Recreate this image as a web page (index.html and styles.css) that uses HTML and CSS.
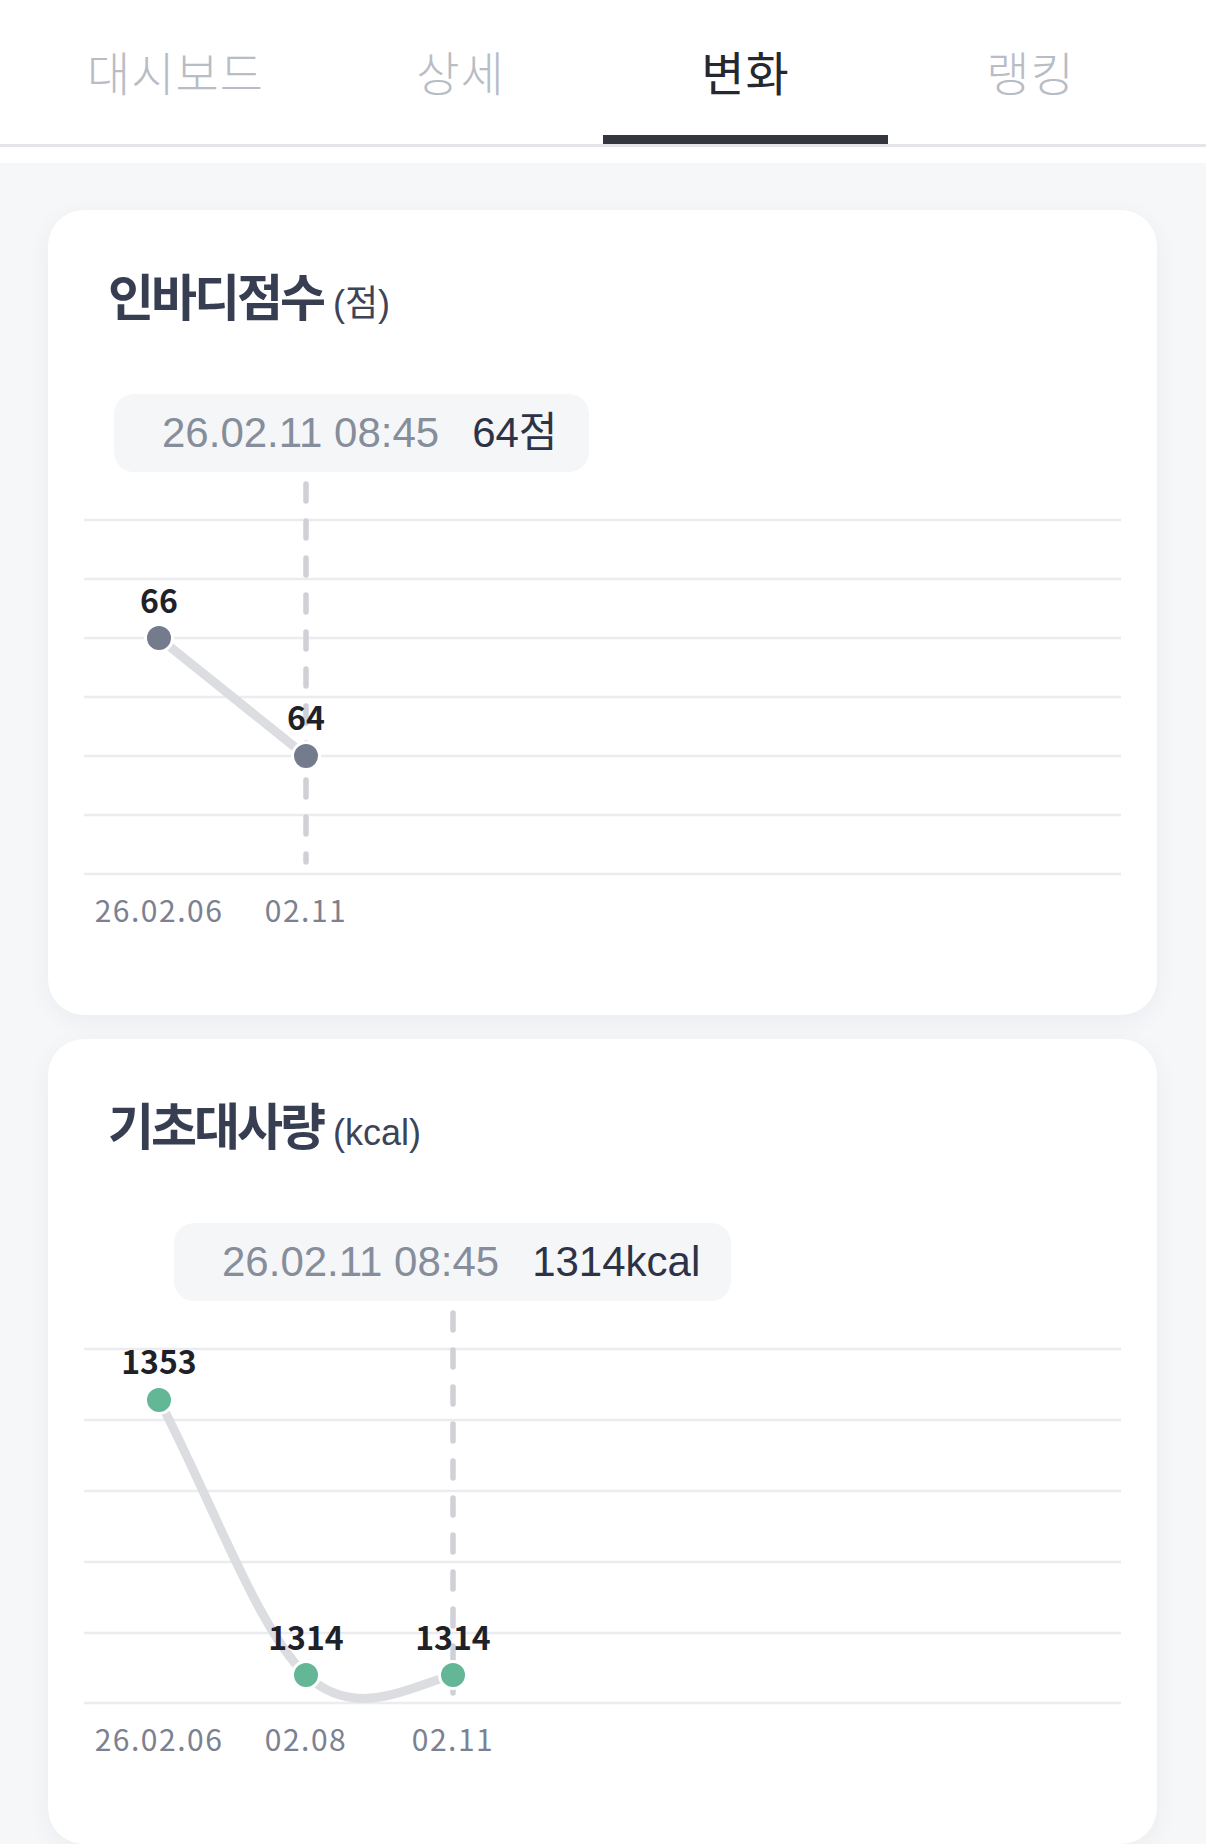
FILE: index.html
```html
<!DOCTYPE html>
<html lang="ko">
<head>
    <meta charset="UTF-8">
    <meta name="viewport" content="width=device-width, initial-scale=1.0">
    <title>변화</title>
    <link rel="stylesheet" href="styles.css">
</head>
<body>

    <!-- 상단 탭 -->
    <header class="top">
        <nav class="tabs">
            <a class="tab" href="#">대시보드</a>
            <a class="tab" href="#">상세</a>
            <a class="tab active" href="#">변화</a>
            <a class="tab" href="#">랭킹</a>
        </nav>
    </header>

    <main class="content">

        <!-- 인바디점수 -->
        <section class="card">
            <h2 class="card-title">인바디점수<span class="unit">(점)</span></h2>
            <div class="chart">
                <div class="tooltip" style="margin-left: 30px;">
                    <span class="tooltip-date">26.02.11 08:45</span>
                    <span class="tooltip-value">64점</span>
                </div>
                <svg class="plot" viewBox="0 0 1037 470">
                    <g class="grid">
                        <line x1="0" y1="48" x2="1037" y2="48"/>
                        <line x1="0" y1="107" x2="1037" y2="107"/>
                        <line x1="0" y1="166" x2="1037" y2="166"/>
                        <line x1="0" y1="225" x2="1037" y2="225"/>
                        <line x1="0" y1="284" x2="1037" y2="284"/>
                        <line x1="0" y1="343" x2="1037" y2="343"/>
                        <line x1="0" y1="402" x2="1037" y2="402"/>
                    </g>
                    <line class="cursor" x1="222" y1="12" x2="222" y2="390"/>
                    <path class="series" d="M75 166 L222 284"/>
                    <circle class="point gray" cx="75" cy="166" r="13.5"/>
                    <circle class="point gray" cx="222" cy="284" r="13.5"/>
                    <text class="val" x="75" y="141">66</text>
                    <text class="val" x="222" y="258">64</text>
                    <text class="axis" x="75" y="450">26.02.06</text>
                    <text class="axis" x="222" y="450">02.11</text>
                </svg>
            </div>
        </section>

        <!-- 기초대사량 -->
        <section class="card">
            <h2 class="card-title">기초대사량<span class="unit">(kcal)</span></h2>
            <div class="chart">
                <div class="tooltip" style="margin-left: 90px;">
                    <span class="tooltip-date">26.02.11 08:45</span>
                    <span class="tooltip-value">1314kcal</span>
                </div>
                <svg class="plot" viewBox="0 0 1037 470">
                    <g class="grid">
                        <line x1="0" y1="48" x2="1037" y2="48"/>
                        <line x1="0" y1="119" x2="1037" y2="119"/>
                        <line x1="0" y1="190" x2="1037" y2="190"/>
                        <line x1="0" y1="261" x2="1037" y2="261"/>
                        <line x1="0" y1="332" x2="1037" y2="332"/>
                        <line x1="0" y1="402" x2="1037" y2="402"/>
                    </g>
                    <line class="cursor" x1="369" y1="12" x2="369" y2="392"/>
                    <path class="series" d="M75 99 C124 191, 173 328, 222 374 C271 420, 325 386, 369 374"/>
                    <circle class="point green" cx="75" cy="99" r="13.5"/>
                    <circle class="point green" cx="222" cy="374" r="13.5"/>
                    <circle class="point green" cx="369" cy="374" r="13.5"/>
                    <text class="val" x="75" y="73">1353</text>
                    <text class="val" x="222" y="349">1314</text>
                    <text class="val" x="369" y="349">1314</text>
                    <text class="axis" x="75" y="450">26.02.06</text>
                    <text class="axis" x="222" y="450">02.08</text>
                    <text class="axis" x="369" y="450">02.11</text>
                </svg>
            </div>
        </section>

    </main>

</body>
</html>
```

FILE: styles.css
```css
/* 기본 */
body {
    margin: 0;
    background-color: #f6f7f9;
    font-family: "Noto Sans CJK KR", "Noto Sans", sans-serif;
    color: #1e2028;
}

/* 상단 탭 */
.top {
    background-color: #fff;
    padding-bottom: 16px;
}

.tabs {
    display: flex;
    height: 144px;
    padding: 0 33px;
    border-bottom: 3px solid #e4e5e9;
}

.tab {
    flex: 1;
    display: flex;
    align-items: center;
    justify-content: center;
    box-sizing: border-box;
    padding-top: 5px;
    border-bottom: 9px solid transparent;
    font-size: 47px;
    font-weight: 300;
    letter-spacing: 1px;
    color: #b8bcc5;
    text-decoration: none;
}

.tab.active {
    color: #262830;
    font-weight: 400;
    border-bottom-color: #33363f;
}

/* 본문 */
.content {
    display: flex;
    flex-direction: column;
    gap: 24px;
    padding: 47px 49px 0 48px;
}

.card {
    background-color: #fff;
    border-radius: 36px;
    box-shadow: 0 6px 24px rgba(30, 35, 50, 0.05);
    padding: 56px 36px 73px;
}

.card-title {
    margin: 0 0 72px;
    padding-left: 24px;
    height: 56px;
    font-size: 50px;
    line-height: 56px;
    font-weight: 700;
    letter-spacing: -3px;
    color: #373e52;
}

.card-title .unit {
    margin-left: 10px;
    font-family: "Liberation Sans", "Noto Sans CJK KR", sans-serif;
    font-size: 36px;
    line-height: 1;
    font-weight: 400;
    letter-spacing: 0;
    color: #3d4458;
}

/* 툴팁 */
.tooltip {
    display: flex;
    width: fit-content;
    align-items: center;
    gap: 33px;
    height: 78px;
    padding: 0 31px 0 48px;
    box-sizing: border-box;
    background-color: #f5f6f8;
    border-radius: 20px;
    font-family: "Liberation Sans", "Noto Sans CJK KR", sans-serif;
    font-size: 42px;
    line-height: 1;
}

.tooltip-date {
    color: #868d9b;
}

.tooltip-value {
    color: #2d3346;
}

/* 차트 */
.plot {
    display: block;
    width: 100%;
    height: 470px;
}

.grid line {
    stroke: #ebecef;
    stroke-width: 2.5;
}

.cursor {
    stroke: #cfd1d6;
    stroke-width: 5.5;
    stroke-dasharray: 17 20;
    stroke-linecap: round;
}

.series {
    fill: none;
    stroke: #dcdde1;
    stroke-width: 9;
    stroke-linecap: round;
}

.point {
    stroke: #fff;
    stroke-width: 3;
}

.point.gray {
    fill: #737b8c;
}

.point.green {
    fill: #63b696;
}

.val {
    font-family: "Noto Sans CJK KR", sans-serif;
    font-size: 32px;
    font-weight: 700;
    fill: #1f2129;
    text-anchor: middle;
}

.axis {
    font-family: "Noto Sans CJK KR", sans-serif;
    font-size: 30px;
    letter-spacing: 1.5px;
    fill: #7b8190;
    text-anchor: middle;
}
```
